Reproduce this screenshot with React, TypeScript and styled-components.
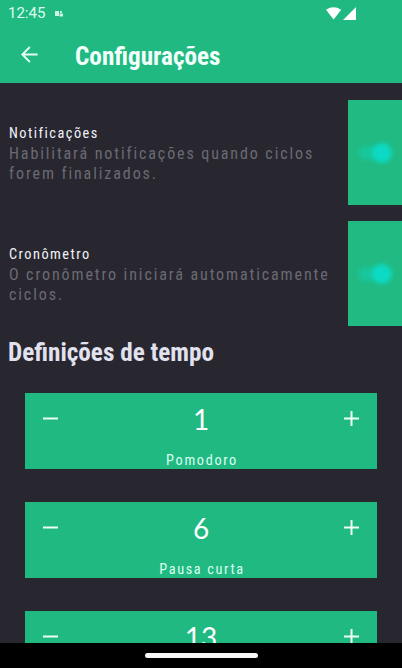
import React from "react";
import styled, { createGlobalStyle } from "styled-components";

const GlobalStyle = createGlobalStyle`
  * { box-sizing: border-box; }
  body { margin: 0; background: #282730; }
`;

const Screen = styled.div`
  width: 402px;
  height: 668px;
  display: flex;
  flex-direction: column;
  overflow: hidden;
  background: #282730;
  color: #fff;
  font-family: Roboto, "Open Sans", sans-serif;
  font-stretch: 75%;
`;

const Header = styled.header`
  flex: none;
  height: 83px;
  background: #20b981;
`;

const StatusBar = styled.div`
  height: 27px;
  padding: 0 45px 0 8px;
  display: flex;
  align-items: center;
`;

const Clock = styled.span`
  font-size: 15px;
  line-height: 27px;
  font-stretch: 100%;
  color: #dcfff1;
  width: 47px;
`;

const StatusIcons = styled.svg`
  margin-left: auto;
`;

const TitleBar = styled.div`
  height: 56px;
  display: flex;
  align-items: center;
  padding-left: 21px;
`;

const BackArrow = styled.svg`
  margin-top: -2px;
`;

const Title = styled.h1`
  margin: 3px 0 0 37px;
  font-size: 25.2px;
  line-height: 28px;
  font-weight: 700;
  white-space: nowrap;
  color: #f2fffb;
`;

const Content = styled.main`
  flex: 1;
  min-height: 0;
  overflow: hidden;
  padding-top: 17px;
`;

const Setting = styled.section`
  height: 105px;
  margin-bottom: 16px;
  display: flex;
  justify-content: space-between;
`;

const SettingText = styled.div`
  padding: 23px 0 0 9px;
`;

const SettingName = styled.div`
  margin-bottom: 1px;
  font-size: 14.3px;
  line-height: 20px;
  letter-spacing: 1.5px;
  color: #f3f3f8;
`;

const SettingHint = styled.div`
  font-size: 16px;
  line-height: 20px;
  letter-spacing: 1.9px;
  color: #6b6a73;
  white-space: nowrap;
`;

const SwitchPanel = styled.div`
  flex: none;
  width: 54px;
  height: 105px;
  background: #21ba82;
  display: flex;
  align-items: center;
  padding-left: 10px;
`;

const Track = styled.div`
  width: 34px;
  height: 14px;
  border-radius: 7px;
  background: #18c69b;
  display: flex;
  align-items: center;
  justify-content: flex-end;
  filter: blur(2px);
`;

const Thumb = styled.div`
  width: 20px;
  height: 20px;
  flex: none;
  border-radius: 50%;
  background: #0cdac4;
`;

const SectionTitle = styled.h2`
  margin: -3px 0 -1px;
  padding: 0 0 0 8px;
  font-size: 25.2px;
  line-height: 28px;
  font-weight: 700;
  color: #e2e1ee;
`;

const TimeCard = styled.section`
  height: 76px;
  margin: 0 25px 33px;
  background: #20b981;
`;

const Stepper = styled.div`
  height: 51px;
  padding: 0 17px;
  display: flex;
  align-items: center;
  justify-content: space-between;
`;

const Value = styled.span`
  font-family: Lato, sans-serif;
  font-size: 28px;
  line-height: 34px;
`;

const CardLabel = styled.div`
  margin-top: 6px;
  padding-left: 2px;
  text-align: center;
  font-size: 14.3px;
  line-height: 20px;
  letter-spacing: 1.65px;
  color: #dcfff1;
`;

const CardList = styled.div`
  padding-top: 27px;
`;

const NavBar = styled.footer`
  flex: none;
  height: 25px;
  background: #000;
  display: flex;
  justify-content: center;
  padding-top: 10px;
`;

const Handle = styled.div`
  width: 113px;
  height: 5px;
  border-radius: 3px;
  background: #f8f8f8;
`;

function Sign({ plus = false }: { plus?: boolean }) {
  return (
    <svg width="17" height="17" viewBox="0 0 17 17" stroke="#eefff8" strokeWidth="2" fill="none">
      <path d={plus ? "M1 8.5H16M8.5 1V16" : "M1 8.5H16"} />
    </svg>
  );
}

const settings = [
  { name: "Notificações", hint: ["Habilitará notificações quando ciclos", "forem finalizados."] },
  { name: "Cronômetro", hint: ["O cronômetro iniciará automaticamente", "ciclos."] },
];

const times: { value: number; label?: string }[] = [
  { value: 1, label: "Pomodoro" },
  { value: 6, label: "Pausa curta" },
  { value: 13 },
];

export default function App() {
  return (
    <Screen>
      <GlobalStyle />
      <Header>
        <StatusBar>
          <Clock>12:45</Clock>
          <svg width="8" height="6" viewBox="0 0 8 6" fill="#c9f7e4">
            <path d="M0 0H4V5H0ZM5 0H6.8V2H5ZM4.5 2.5H8V5.5H4.5Z" />
          </svg>
          <StatusIcons width="31" height="14" viewBox="0 0 31 14" fill="#fff">
            <path d="M0 2.7Q7.6-2.2 15.2 2.7L7.6 12.4ZM30 0V13H17Z" />
          </StatusIcons>
        </StatusBar>
        <TitleBar>
          <BackArrow width="17" height="17" viewBox="0 0 17 17" fill="none" stroke="#e8fff7" strokeWidth="1.8">
            <path d="M16.6 8.5H1.5M8.8 1L1.3 8.5L8.8 16" />
          </BackArrow>
          <Title>Configurações</Title>
        </TitleBar>
      </Header>
      <Content>
        {settings.map((s) => (
          <Setting key={s.name}>
            <SettingText>
              <SettingName>{s.name}</SettingName>
              {s.hint.map((line) => (
                <SettingHint key={line}>{line}</SettingHint>
              ))}
            </SettingText>
            <SwitchPanel>
              <Track>
                <Thumb />
              </Track>
            </SwitchPanel>
          </Setting>
        ))}
        <SectionTitle>Definições de tempo</SectionTitle>
        <CardList>
          {times.map((t) => (
            <TimeCard key={t.value}>
              <Stepper>
                <Sign />
                <Value>{t.value}</Value>
                <Sign plus />
              </Stepper>
              {t.label && <CardLabel>{t.label}</CardLabel>}
            </TimeCard>
          ))}
        </CardList>
      </Content>
      <NavBar>
        <Handle />
      </NavBar>
    </Screen>
  );
}
